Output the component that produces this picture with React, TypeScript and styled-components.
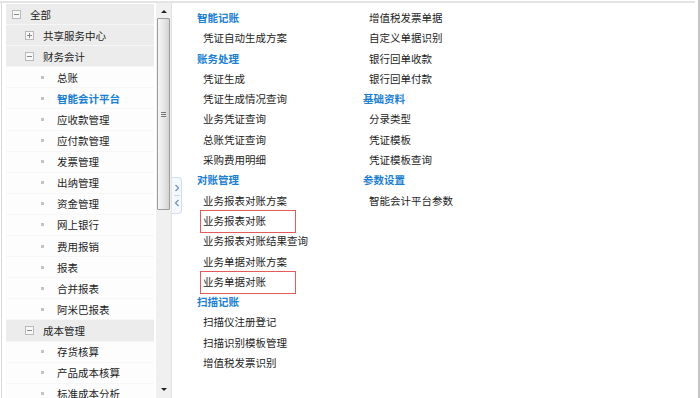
import styled, { createGlobalStyle } from "styled-components";

const GlobalStyle = createGlobalStyle`
  html, body {
    margin: 0;
    padding: 0;
    background: #ffffff;
  }
  body {
    font-family: "Noto Sans CJK SC", "Noto Sans", sans-serif;
    font-size: 10.5px;
    color: #1c1c1c;
  }
`;

type TreeNode = {
  label: string;
  level: number;
  kind: "group" | "leaf";
  open?: boolean;
  active?: boolean;
};

const treeData: TreeNode[] = [
  { label: "全部", level: 0, kind: "group", open: true },
  { label: "共享服务中心", level: 1, kind: "group", open: false },
  { label: "财务会计", level: 1, kind: "group", open: true },
  { label: "总账", level: 2, kind: "leaf" },
  { label: "智能会计平台", level: 2, kind: "leaf", active: true },
  { label: "应收款管理", level: 2, kind: "leaf" },
  { label: "应付款管理", level: 2, kind: "leaf" },
  { label: "发票管理", level: 2, kind: "leaf" },
  { label: "出纳管理", level: 2, kind: "leaf" },
  { label: "资金管理", level: 2, kind: "leaf" },
  { label: "网上银行", level: 2, kind: "leaf" },
  { label: "费用报销", level: 2, kind: "leaf" },
  { label: "报表", level: 2, kind: "leaf" },
  { label: "合并报表", level: 2, kind: "leaf" },
  { label: "阿米巴报表", level: 2, kind: "leaf" },
  { label: "成本管理", level: 1, kind: "group", open: true },
  { label: "存货核算", level: 2, kind: "leaf" },
  { label: "产品成本核算", level: 2, kind: "leaf" },
  { label: "标准成本分析", level: 2, kind: "leaf" },
];

type MenuEntry = { text: string; heading?: boolean; marked?: boolean };

const column1: MenuEntry[] = [
  { text: "智能记账", heading: true },
  { text: "凭证自动生成方案" },
  { text: "账务处理", heading: true },
  { text: "凭证生成" },
  { text: "凭证生成情况查询" },
  { text: "业务凭证查询" },
  { text: "总账凭证查询" },
  { text: "采购费用明细" },
  { text: "对账管理", heading: true },
  { text: "业务报表对账方案" },
  { text: "业务报表对账", marked: true },
  { text: "业务报表对账结果查询" },
  { text: "业务单据对账方案" },
  { text: "业务单据对账", marked: true },
  { text: "扫描记账", heading: true },
  { text: "扫描仪注册登记" },
  { text: "扫描识别模板管理" },
  { text: "增值税发票识别" },
];

const column2: MenuEntry[] = [
  { text: "增值税发票单据" },
  { text: "自定义单据识别" },
  { text: "银行回单收款" },
  { text: "银行回单付款" },
  { text: "基础资料", heading: true },
  { text: "分录类型" },
  { text: "凭证模板" },
  { text: "凭证模板查询" },
  { text: "参数设置", heading: true },
  { text: "智能会计平台参数" },
];

function ExpandIcon({ open }: { open?: boolean }) {
  return (
    <svg width="9" height="9" viewBox="0 0 9 9">
      <rect x="0.5" y="0.5" width="8" height="8" fill="#f7f7f7" stroke="#b9b9b9" />
      <line x1="2" y1="4.5" x2="7" y2="4.5" stroke="#8a8a8a" />
      {!open && <line x1="4.5" y1="2" x2="4.5" y2="7" stroke="#8a8a8a" />}
    </svg>
  );
}

function App() {
  return (
    <Page>
      <GlobalStyle />
      <Frame>
        <Sidebar>
          <TreeList>
            {treeData.map((node) => (
              <TreeRow key={node.label} $kind={node.kind} $level={node.level}>
                <IconSlot>
                  {node.kind === "group" ? <ExpandIcon open={node.open} /> : <Bullet />}
                </IconSlot>
                <TreeLabel $active={node.active}>{node.label}</TreeLabel>
              </TreeRow>
            ))}
          </TreeList>
          <ScrollBar>
            <ScrollArrow $dir="up" />
            <ScrollThumb>
              <Grip />
            </ScrollThumb>
            <ScrollTrack />
            <ScrollArrow $dir="down" />
          </ScrollBar>
        </Sidebar>
        <Content>
          <CollapseToggle>
            <svg width="8" height="10" viewBox="0 0 8 10">
              <polyline points="2.5,2 5.5,5 2.5,8" fill="none" stroke="#7b93aa" strokeWidth="1.3" />
            </svg>
            <ToggleDivider />
            <svg width="8" height="10" viewBox="0 0 8 10">
              <polyline points="5.5,2 2.5,5 5.5,8" fill="none" stroke="#7b93aa" strokeWidth="1.3" />
            </svg>
          </CollapseToggle>
          <MenuColumns>
            {[column1, column2].map((col, ci) => (
              <MenuColumn key={ci}>
                {col.map((entry) =>
                  entry.heading ? (
                    <MenuHeading key={entry.text}>{entry.text}</MenuHeading>
                  ) : (
                    <MenuItem key={entry.text}>
                      <ItemText $marked={entry.marked}>{entry.text}</ItemText>
                    </MenuItem>
                  )
                )}
              </MenuColumn>
            ))}
          </MenuColumns>
        </Content>
      </Frame>
      <EdgeBar />
    </Page>
  );
}

export default App;

const Page = styled.div`
  display: flex;
  height: 398px;
  width: 700px;
  padding-top: 1px;
  box-sizing: border-box;
  overflow: hidden;
`;

const Frame = styled.div`
  flex: 1;
  display: flex;
  border-top: 2px solid #e4e4e4;
  min-width: 0;
`;

const EdgeBar = styled.div`
  width: 2px;
  margin-left: 3px;
  margin-top: -1px;
  background: #c4c4c4;
`;

const Sidebar = styled.div`
  width: 169px;
  margin-left: 1px;
  display: flex;
  border-left: 1px solid #dadada;
  border-right: 1px solid #e2e2e2;
  overflow: hidden;
  background: #ffffff;
`;

const TreeList = styled.div`
  width: 148px;
  padding: 1px 0 0 4px;
  display: flex;
  flex-direction: column;
  flex-shrink: 0;
`;

const TreeRow = styled.div<{ $kind: "group" | "leaf"; $level: number }>`
  height: 21.1px;
  flex-shrink: 0;
  display: flex;
  align-items: center;
  gap: ${(p) => (p.$kind === "group" ? 9 : 10)}px;
  padding-left: ${(p) => 6 + p.$level * 13}px;
  box-sizing: border-box;
  background: ${(p) => (p.$kind === "group" ? "#ececec" : "#fdfdfd")};
  border-bottom: 1px solid #f6f6f6;
`;

const IconSlot = styled.span`
  width: 9px;
  height: 9px;
  display: flex;
  align-items: center;
  justify-content: center;
`;

const Bullet = styled.span`
  width: 3px;
  height: 3px;
  background: #c4c4c4;
`;

const TreeLabel = styled.span<{ $active?: boolean }>`
  white-space: nowrap;
  color: ${(p) => (p.$active ? "#1b80d3" : "#1c1c1c")};
  font-weight: ${(p) => (p.$active ? 700 : 400)};
`;

const ScrollBar = styled.div`
  width: 15px;
  margin-left: 2px;
  display: flex;
  flex-direction: column;
  background: #f0f0f0;
  padding: 0 1px;
  box-sizing: border-box;
`;

const ScrollArrow = styled.div<{ $dir: "up" | "down" }>`
  height: 15px;
  flex-shrink: 0;
  display: flex;
  align-items: center;
  justify-content: center;
  &::before {
    content: "";
    border-left: 3px solid transparent;
    border-right: 3px solid transparent;
    ${(p) =>
      p.$dir === "up"
        ? "border-bottom: 3px solid #222; margin-top: 1px;"
        : "border-top: 3px solid #222; margin-bottom: 2px;"}
  }
`;

const ScrollThumb = styled.div`
  height: 192px;
  flex-shrink: 0;
  border: 1px solid #9c9c9c;
  border-radius: 1px;
  box-sizing: border-box;
  background: linear-gradient(to right, #f6f6f6, #e4e4e4 60%, #d2d2d2);
  display: flex;
  align-items: center;
  justify-content: center;
`;

const Grip = styled.div`
  width: 5px;
  height: 5px;
  border-top: 1px solid #777;
  border-bottom: 1px solid #777;
  box-sizing: border-box;
  position: relative;
  &::after {
    content: "";
    position: absolute;
    left: 0;
    right: 0;
    top: 1px;
    height: 1px;
    background: #777;
  }
`;

const ScrollTrack = styled.div`
  flex: 1;
`;

const Content = styled.div`
  flex: 1;
  position: relative;
  background: #ffffff;
`;

const CollapseToggle = styled.div`
  position: absolute;
  left: 0;
  top: 174px;
  width: 10px;
  height: 37px;
  border: 1px solid #cde0f3;
  border-left: none;
  border-radius: 0 4px 4px 0;
  background: #f5f9fd;
  display: flex;
  flex-direction: column;
  align-items: center;
  justify-content: center;
  gap: 2px;
  box-sizing: border-box;
`;

const ToggleDivider = styled.div`
  width: 6px;
  height: 1px;
  background: #c9d6e3;
`;

const MenuColumns = styled.div`
  display: flex;
  padding: 5px 0 0 25px;
`;

const MenuColumn = styled.div`
  width: 166px;
  display: flex;
  flex-direction: column;
`;

const MenuHeading = styled.div`
  height: 20.3px;
  line-height: 20.3px;
  color: #1b80d3;
  font-weight: 700;
  white-space: nowrap;
`;

const MenuItem = styled.div`
  height: 20.3px;
  line-height: 20.3px;
  padding-left: 6px;
  white-space: nowrap;
`;

const ItemText = styled.span<{ $marked?: boolean }>`
  position: relative;
  color: #1c1c1c;
  ${(p) =>
    p.$marked &&
    `
    &::after {
      content: "";
      position: absolute;
      left: -3px;
      top: -3px;
      width: 96px;
      height: 23px;
      border: 1px solid #e35b5b;
      box-sizing: border-box;
    }
  `}
`;
